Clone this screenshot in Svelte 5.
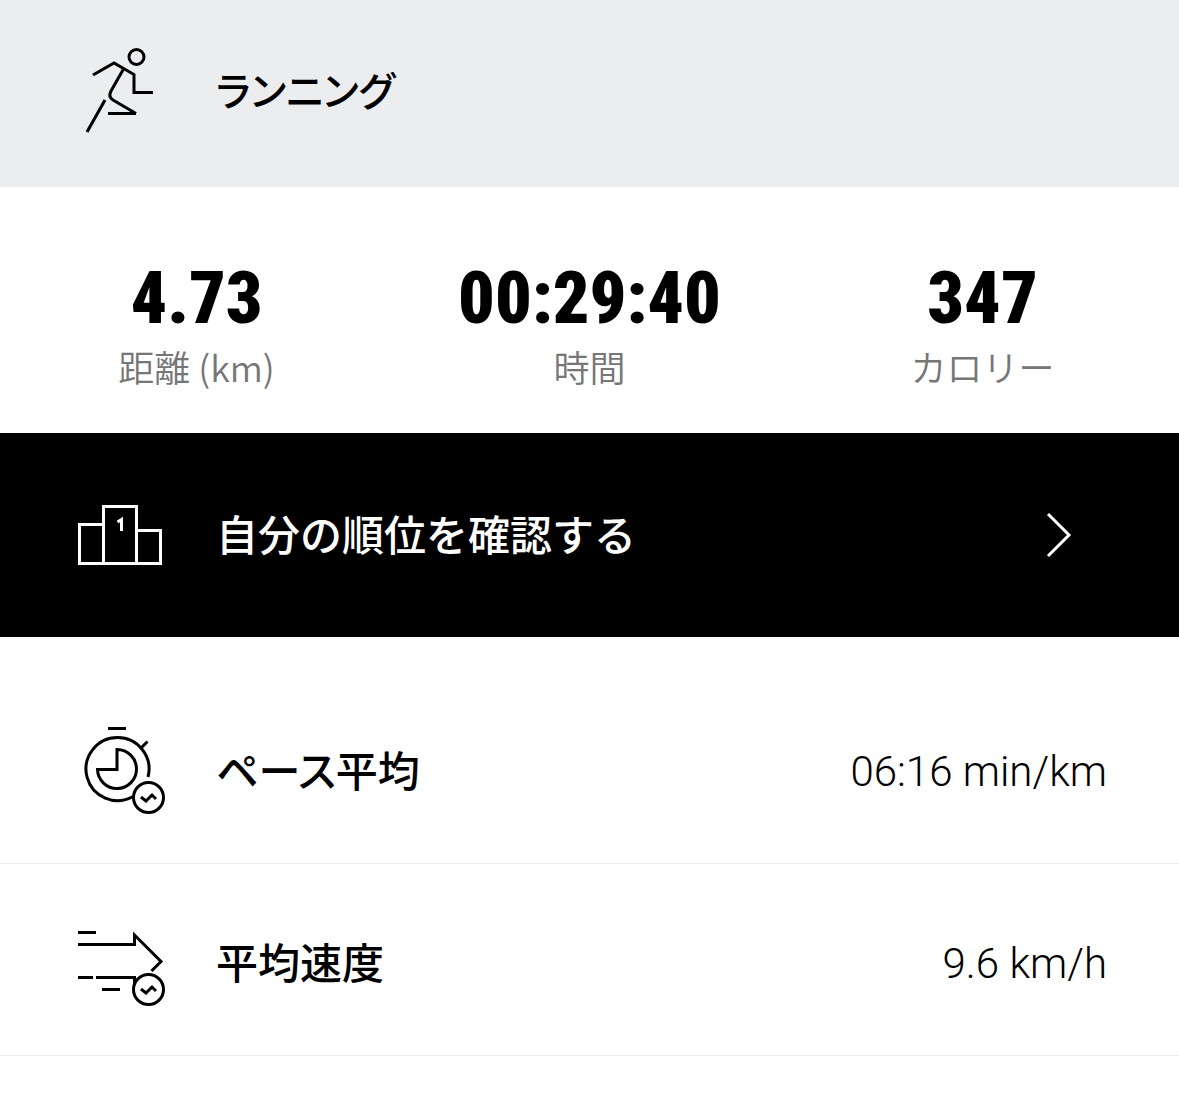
<style>
    :global(body) {
        background-color: #fff;
        color: #000;
        font-family: "Noto Sans CJK JP", sans-serif;
    }

    .header,
    .ranking,
    .detail {
        display: flex;
        align-items: center;
        box-sizing: border-box;
        padding: 0 72px;
    }

    .header {
        min-height: 187px;
        padding-bottom: 6px;
        background-color: #ecedef;
    }

    .icon {
        flex: none;
        width: 96px;
        height: 96px;
        margin-right: 48px;
        fill: none;
        stroke: currentColor;
        stroke-width: 3;
    }

    h1,
    .ranking-label,
    .detail dt {
        padding-bottom: 4px;
        font-size: 42px;
        line-height: 60px;
        font-weight: 500;
    }

    h1 {
        margin: 0;
        font-size: 40px;
    }

    .palt {
        font-feature-settings: "palt";
    }

    .stats {
        display: grid;
        grid-template-columns: repeat(3, 1fr);
        margin: 0;
        padding: 70px 0 42px;
        text-align: center;
    }

    .stat {
        display: flex;
        flex-direction: column-reverse;
    }

    .stat dt {
        color: #767677;
        font-size: 36px;
        line-height: 50px;
        font-weight: 350;
    }

    .stat dd {
        margin: 0;
        font-family: "Roboto Condensed", Roboto, sans-serif;
        font-size: 72px;
        line-height: 84px;
        font-weight: 900;
    }

    .ranking {
        min-height: 204px;
        background-color: #000;
        color: #fff;
        text-decoration: none;
    }

    .arrow {
        flex: none;
        width: 48px;
        height: 48px;
        margin-left: auto;
        margin-right: 24px;
        fill: none;
        stroke: currentColor;
        stroke-width: 3;
    }

    .details {
        margin: 0;
        padding-top: 35px;
    }

    .detail {
        min-height: 192px;
        padding-top: 6px;
        border-bottom: 1px solid #ebedee;
    }

    .detail dd {
        margin: 0 0 0 auto;
        padding-top: 2px;
        font-family: Roboto, sans-serif;
        font-size: 42px;
        line-height: 60px;
        font-weight: 300;
    }
</style>

<script>
    const stats = [
        { label: '距離 (km)', value: '4.73' },
        { label: '時間', value: '00:29:40' },
        { label: 'カロリー', value: '347' }
    ];

    const details = [
        { icon: 'pace', label: 'ペース平均', value: '06:16 min/km' },
        { icon: 'speed', label: '平均速度', value: '9.6 km/h' }
    ];
</script>

<main>
    <header class="header">
        <svg class="icon" viewBox="0 0 96 96" aria-hidden="true">
            <circle cx="64.500" cy="14" r="7.500" />
            <path d="M21 32 42 20 62 31.500V49.500H81" />
            <path d="M51.500 26 39 48Q36 54 41 57L64 70.500" />
            <path d="M36 70.500H64" />
            <path d="M33 57 15 89" />
        </svg>
        <h1 class="palt">ランニング</h1>
    </header>

    <dl class="stats">
        {#each stats as stat}
            <div class="stat">
                <dt>{stat.label}</dt>
                <dd>{stat.value}</dd>
            </div>
        {/each}
    </dl>

    <a class="ranking" href="#ranking">
        <svg class="icon" viewBox="0 0 96 96" aria-hidden="true">
            <path d="M31.500 76.500V19.500H64.500V76.500M31.500 37.500H7.500V76.500H88.500V43.500H64.500" />
            <path d="M45.500 35 49.500 32.500V44" />
        </svg>
        <span class="ranking-label">自分の順位を確認する</span>
        <svg class="arrow" viewBox="0 0 48 48" aria-hidden="true">
            <path d="M13 3 34 24 13 45" />
        </svg>
    </a>

    <dl class="details">
        {#each details as detail}
            <div class="detail">
                <svg class="icon" viewBox="0 0 96 96" aria-hidden="true">
                    {#if detail.icon === 'pace'}
                        <path d="M36 5.500H54M69 25 75.500 18.500" />
                        <path d="M76 54A31.500 31.500 0 1 0 61 73.500" />
                        <path d="M45 26.500V46.500H25.500A19.500 19.500 0 1 0 45 26.500Z" />
                    {:else}
                        <path d="M6 17.500H24M6 29.500H62.500V20L89 46.500 79.500 56" />
                        <path d="M6 62.500H21M24 62.500H62.500V69M30 74.500H48" />
                    {/if}
                    <circle cx="76.500" cy="74.500" r="15" />
                    <path d="M69 74 74 78 80 72 84 76" />
                </svg>
                <dt class="palt">{detail.label}</dt>
                <dd>{detail.value}</dd>
            </div>
        {/each}
    </dl>
</main>
